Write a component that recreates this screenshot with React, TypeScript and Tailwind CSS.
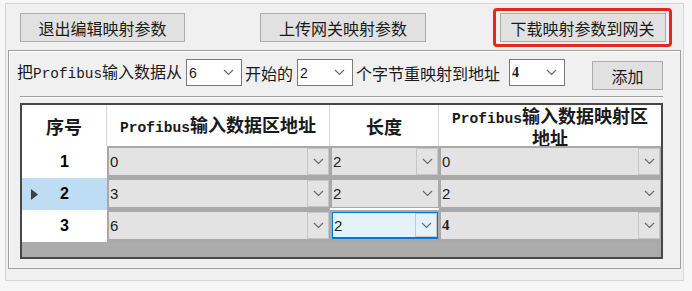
import clsx from 'clsx'

const cjk = "font-['Noto_Sans_CJK_SC','Noto_Sans',sans-serif]"

function Chevron() {
  return (
    <svg width="11" height="7" viewBox="0 0 11 7">
      <polyline points="1,1 5.5,5.5 10,1" fill="none" stroke="#6a6a6a" strokeWidth="1.2" />
    </svg>
  )
}

function WinButton({ label, className }: { label: string; className?: string }) {
  return (
    <div
      className={clsx(
        'h-[29px] bg-[#e1e1e1] border border-[#adadad] flex items-center justify-center text-[16px] leading-none text-[#1a1a1a]',
        className,
      )}
    >
      {label}
    </div>
  )
}

function TopCombo({ value, serif }: { value: string; serif?: boolean }) {
  return (
    <div className="w-[56px] h-[27px] shrink-0 bg-white border border-[#7a7a7a] flex items-center justify-between pl-[2px] pr-[7px]">
      <span
        className={clsx(
          'text-[14px] leading-none',
          serif ? "font-['Liberation_Serif',serif] font-bold" : "font-['Liberation_Sans',sans-serif]",
        )}
      >
        {value}
      </span>
      <Chevron />
    </div>
  )
}

type CellState = 'normal' | 'plain' | 'focus'

function GridCell({
  value,
  state = 'normal',
  serif,
  whiteBottom,
}: {
  value: string
  state?: CellState
  serif?: boolean
  whiteBottom?: boolean
}) {
  return (
    <div
      className={clsx(
        'h-[32px] bg-[#a9a9a9] pt-[2px] pb-[3px] pl-[2px] pr-[1px]',
        whiteBottom && 'shadow-[inset_0_-2px_0_#ffffff]',
      )}
    >
      <div
        className={clsx(
          'h-full flex',
          state === 'focus' ? 'bg-[#e5f1fb] border border-b-2 border-[#0078d7]' : 'bg-[#e3e3e3]',
        )}
      >
        <span
          className={clsx(
            'flex-1 flex items-center pl-[1px] text-[15px] leading-none text-[#222]',
            serif ? "font-['Liberation_Serif',serif] font-bold" : "font-['Liberation_Sans',sans-serif]",
          )}
        >
          {value}
        </span>
        <div
          className={clsx(
            'w-[22px] flex items-center justify-center',
            state !== 'plain' && 'border border-[#c6c6c6]',
          )}
        >
          <Chevron />
        </div>
      </div>
    </div>
  )
}

function RowHead({ n, selected }: { n: string; selected?: boolean }) {
  return (
    <div
      className={clsx(
        'h-[32px] relative flex items-center justify-center text-[16px] font-bold leading-none',
        "font-['Liberation_Sans',sans-serif]",
        selected ? 'bg-[#bedcf3]' : 'bg-white',
      )}
    >
      {selected && (
        <svg width="7" height="11" viewBox="0 0 7 11" className="absolute left-[9px] top-[11px]">
          <polygon points="0,0 7,5.5 0,11" fill="#404040" />
        </svg>
      )}
      {n}
    </div>
  )
}

function Mono({ size }: { size: string }) {
  return <span className={clsx("font-['Liberation_Mono',monospace]", size)}>Profibus</span>
}

const rows = [
  { n: '1', addr: '0', len: '2', map: '0' },
  { n: '2', addr: '3', len: '2', map: '2' },
  { n: '3', addr: '6', len: '2', map: '4' },
]

export default function App() {
  return (
    <div className={clsx('w-[692px] h-[291px] bg-[#f7f7f7] pl-[5px] pt-[3px] overflow-hidden', cjk)}>
      <div className="w-[679px] h-[278px] bg-[#f0f0f0] border border-[#d6d6d6]">
        {/* кнопки сверху */}
        <div className="flex items-center h-[39px] mt-[4px] pl-[14px]">
          <WinButton label="退出编辑映射参数" className="w-[165px]" />
          <WinButton label="上传网关映射参数" className="w-[166px] ml-[75px]" />
          <div className="ml-[67px] w-[179px] h-[39px] border-[3px] border-[#e8261d] rounded-[4px] flex items-center justify-center">
            <WinButton label="下载映射参数到网关" className="w-[166px]" />
          </div>
        </div>

        {/* группа */}
        <div className="mt-[3px] ml-[2px] w-[673px] h-[219px] border border-[#a0a0a0] shadow-[inset_1px_1px_0_#ffffff]">
          <div className="flex items-start h-[31px] mt-[8px] pl-[8px] text-[16px] leading-none text-[#1a1a1a]">
            <div className="w-[169px] h-[27px] flex items-center">
              <span className="whitespace-nowrap">
                把<Mono size="text-[14.4px]" />输入数据从
              </span>
            </div>
            <TopCombo value="6" />
            <span className="w-[55px] h-[27px] flex items-center pl-[3px]">开始的</span>
            <TopCombo value="2" />
            <span className="w-[156px] h-[27px] flex items-center pl-[3px] whitespace-nowrap">个字节重映射到地址</span>
            <TopCombo value="4" serif />
            <WinButton label="添加" className="w-[71px] h-[28px] ml-[27px] mt-[2px]" />
          </div>

          <div className="ml-[11px] mt-[6px] w-[643px] h-[2px] border-t border-[#a0a0a0] border-b border-b-white" />

          {/* таблица */}
          <div className="ml-[11px] mt-[5px] w-[643px] h-[156px] border-2 border-[#474747] bg-[#ababab] overflow-hidden">
            <div className="grid grid-cols-[85px_223px_109px_222px] h-[41px] bg-white text-[18px] font-bold leading-none text-[#1a1a1a]">
              <div className="flex items-center justify-center border-r border-[#d6d6d6]">序号</div>
              <div className="flex items-center justify-center border-r border-[#d6d6d6]">
                <span className="whitespace-nowrap">
                  <Mono size="text-[14.6px]" />输入数据区地址
                </span>
              </div>
              <div className="flex items-center justify-center border-r border-[#d6d6d6]">长度</div>
              <div className="flex items-center justify-center">
                <span className="text-center leading-[18px] whitespace-nowrap">
                  <Mono size="text-[14.6px]" />输入数据映射区
                  <br />
                  地址
                </span>
              </div>
            </div>
            {rows.map((r, i) => (
              <div key={r.n} className="grid grid-cols-[85px_223px_109px_222px]">
                <RowHead n={r.n} selected={i === 1} />
                <GridCell value={r.addr} />
                <GridCell
                  value={r.len}
                  state={i === 1 ? 'plain' : i === 2 ? 'focus' : 'normal'}
                  whiteBottom={i === 1}
                />
                <GridCell value={r.map} state={i === 1 ? 'plain' : 'normal'} serif={i === 2} />
              </div>
            ))}
          </div>
        </div>
      </div>
    </div>
  )
}
